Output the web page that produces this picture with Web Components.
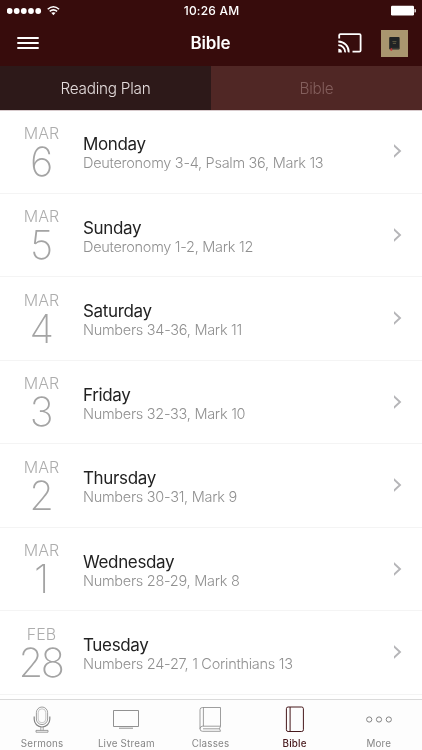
<!DOCTYPE html>
<html lang="en">
<head>
<meta charset="utf-8">
<title>Bible</title>
<style>
body{margin:0;background:#fff;font-family:Inter,"Liberation Sans",sans-serif}
</style>
</head>
<body>
<bible-app></bible-app>
<script>
const define = (name, html, setup) => customElements.define(name, class extends HTMLElement {
  constructor(){ super(); this.attachShadow({mode:'open'}); }
  connectedCallback(){
    const t = document.createElement('template');
    t.innerHTML = html;
    this.shadowRoot.replaceChildren(t.content.cloneNode(true));
    if (setup) setup(this, this.shadowRoot);
  }
});

define('status-bar', `<style>
:host{display:grid;grid-template-columns:1fr auto 1fr;align-items:center;height:21px;padding:0 6px 0 7px;color:#fff;box-sizing:border-box}
span{font-size:12px;line-height:21px;font-weight:450;letter-spacing:.2px}
svg{display:block}
.r{justify-self:end}
</style>
<svg width="54" height="12" viewBox="0 0 54 12"><g fill="#fff"><circle cx="2.6" cy="6" r="2.9"/><circle cx="9.7" cy="6" r="2.9"/><circle cx="16.8" cy="6" r="2.9"/><circle cx="24" cy="6" r="2.9"/><circle cx="31.2" cy="6" r="2.9"/><path d="M44.2 7.8Q46.4 6.5 48.6 7.8L46.4 10.2Z"/></g><g fill="none" stroke="#fff" stroke-width="1.5"><path d="M40.7 4.2Q46.4-.6 52.1 4.2"/><path d="M42.7 6.4Q46.4 3.3 50.1 6.4"/></g></svg>
<span>10:26 AM</span>
<svg class="r" width="26" height="11" viewBox="0 0 26 11"><rect x="1" y=".7" width="23" height="9.8" rx="1.2" fill="#fff"/><path d="M24.5 4h.6a.7.7 0 0 1 .7.7v2a.7.7 0 0 1-.7.7h-.6z" fill="#fff"/></svg>`);

define('nav-bar', `<style>
:host{display:grid;grid-template-columns:1fr auto 1fr;align-items:center;height:45px;padding:0 14px 0 17px;color:#fff;box-sizing:border-box}
h1{margin:0;font-size:17px;line-height:24px;font-weight:600;letter-spacing:-.2px;padding:0 4px 2px 0}
.r{display:flex;justify-self:end;align-items:center;gap:19.5px}
svg{display:block}
.menu{margin-top:-1px}
.r svg{margin-top:-1px}
</style>
<svg class="menu" width="22" height="14" viewBox="0 0 22 14"><path d="M.3 2h21.4M.3 7h21.4M.3 12.1h21.4" stroke="#fff" stroke-width="2"/></svg>
<h1><slot></slot></h1>
<div class="r">
<svg width="24" height="20" viewBox="0 0 24 20"><g fill="none" stroke="#fff" stroke-width="1.8"><path d="M1.2 5.6V2.3q0-1.2 1.2-1.2h19q1.2 0 1.2 1.2v15.1q0 1.2-1.2 1.2H14.5"/><path d="M.3 8.5a10.4 10.4 0 0 1 10.4 10.9M.3 12.2a6.9 6.9 0 0 1 6.9 7.2"/></g><path d="M.3 15.7a3.6 3.6 0 0 1 3.6 3.7H.3z" fill="#fff"/></svg>
<svg width="27" height="27" viewBox="0 0 27 27"><path fill="#a9966f" d="M0 0h27v27H0z"/><rect x="8.2" y="7" width="10.4" height="12.4" rx="1" fill="#202324"/><path d="M9.5 18.3h9" stroke="#55513f" stroke-width=".6"/><path d="M11.4 11.6h4M11.8 13.4h3.2" stroke="#77704c" stroke-width=".7"/><path d="M9.6 18.3h1.5v2.8l-.8-.6-.7.6z" fill="#c52a30"/></svg>
</div>`);

define('segment-tabs', `<style>
:host{display:grid;grid-template-columns:1fr 1fr;height:44px}
div{display:grid;place-items:center;font-size:15.3px;font-weight:330;line-height:20px;letter-spacing:-.25px;padding-top:1px}
.a{background:#2d1919;color:#e4dcdc}.b{background:#502725;color:#845f5d}
</style><div class="a"><slot name="active"></slot></div><div class="b"><slot name="other"></slot></div>`);

define('plan-row', `<style>
:host{display:grid;grid-template-columns:83px 1fr 28px;height:83.5px;box-sizing:border-box;border-bottom:1px solid #f4f4f4}
.d{text-align:center;color:#adadad;padding-top:13.6px}
.m{font-size:16px;line-height:19px;font-weight:300;letter-spacing:.1px}
.n{font-size:40px;line-height:38px;font-weight:160;letter-spacing:-2.3px;text-indent:-2px;color:#a4a4a4}
.t{padding-top:23.1px;min-width:0;white-space:nowrap}
.h{font-size:17px;line-height:22px;font-weight:370;letter-spacing:-.35px;color:#222}
.s{font-size:14.5px;line-height:16px;font-weight:320;letter-spacing:-.28px;color:#909090}
svg{display:block;margin-top:33.4px}
</style>
<div class="d"><div class="m"></div><div class="n"></div></div>
<div class="t"><div class="h"></div><div class="s"><slot></slot></div></div>
<svg width="10" height="16" viewBox="0 0 10 16"><path d="M-.5 1.9 6 8-.5 14.1" fill="none" stroke="#b5b5b8" stroke-width="1.9"/></svg>`,
(el, r) => {
  r.querySelector('.m').textContent = el.getAttribute('month');
  r.querySelector('.n').textContent = el.getAttribute('date');
  r.querySelector('.h').textContent = el.getAttribute('day');
});

const icons = {
  mic:'<rect x="9.4" y="1" width="11.2" height="17.6" rx="5.6" stroke-width=".8"/><rect x="11.2" y="2.8" width="7.6" height="14" rx="3.8" stroke-width=".45"/><path d="M7.2 10.5v2.7a7.8 7.8 0 0 0 15.6 0V10.5" stroke-width="1.2"/><path d="M13.8 21v3.3M16.2 21v3.3" stroke-width=".7"/><path d="M9 24.4h12v1.8H9z" stroke-width=".8"/>',
  tv:'<path d="M2.5 4.5h25v16h-25zM8 22.2h14" stroke-width=".9"/>',
  classes:'<path d="M7.5 1.5h18v18.7H7.5Q5 20.3 5 22.8V3.8Q5 1.5 7.5 1.5zM8.4 1.5v18.7M5 22.8Q5 25.3 7.5 25.3h18M25.5 20.2q-2 2.5 0 5M8 22.8h16.5" stroke-width=".8"/>',
  book:'<rect x="6.4" y="1" width="17" height="24.5" rx="1.7"/><path d="M10.1 1v24.5"/>',
  more:'<circle cx="5.2" cy="13.5" r="2.6"/><circle cx="15" cy="13.5" r="2.6"/><circle cx="24.8" cy="13.5" r="2.6"/>'
};
define('tab-item', `<style>
:host{display:flex;flex-direction:column;align-items:center;padding-top:6px;color:#858585;font-size:9.8px;line-height:14px;font-weight:430;white-space:nowrap;letter-spacing:.2px}
:host([active]){color:#47181b;font-weight:500}
svg{display:block;fill:none;stroke:currentColor;stroke-width:1;margin-bottom:3px;overflow:visible}
</style><svg width="30" height="28" viewBox="0 0 30 28"></svg><span><slot></slot></span>`,
(el, r) => { r.querySelector('svg').innerHTML = icons[el.getAttribute('icon')]; });

define('bible-app', `<style>
:host{display:flex;flex-direction:column;width:422px;height:750px;overflow:hidden;will-change:transform}
header{background:#370c0c;flex:none}
main{height:589px;box-sizing:border-box;flex:none;border-top:1px solid #d8cbcd}
main plan-row:first-child{margin-top:-1px}
nav{flex:1;display:grid;grid-template-columns:repeat(5,84.2px);border-top:1px solid #dadada;background:#fdfdfd}
</style>
<header><status-bar></status-bar><nav-bar>Bible</nav-bar>
<segment-tabs><span slot="active">Reading Plan</span><span slot="other">Bible</span></segment-tabs></header>
<main>
<plan-row month="MAR" date="6" day="Monday">Deuteronomy 3-4, Psalm 36, Mark 13</plan-row>
<plan-row month="MAR" date="5" day="Sunday">Deuteronomy 1-2, Mark 12</plan-row>
<plan-row month="MAR" date="4" day="Saturday">Numbers 34-36, Mark 11</plan-row>
<plan-row month="MAR" date="3" day="Friday">Numbers 32-33, Mark 10</plan-row>
<plan-row month="MAR" date="2" day="Thursday">Numbers 30-31, Mark 9</plan-row>
<plan-row month="MAR" date="1" day="Wednesday">Numbers 28-29, Mark 8</plan-row>
<plan-row month="FEB" date="28" day="Tuesday">Numbers 24-27, 1 Corinthians 13</plan-row>
</main>
<nav><tab-item icon="mic">Sermons</tab-item><tab-item icon="tv">Live Stream</tab-item><tab-item icon="classes">Classes</tab-item><tab-item icon="book" active>Bible</tab-item><tab-item icon="more">More</tab-item></nav>`);
</script>
</body>
</html>
